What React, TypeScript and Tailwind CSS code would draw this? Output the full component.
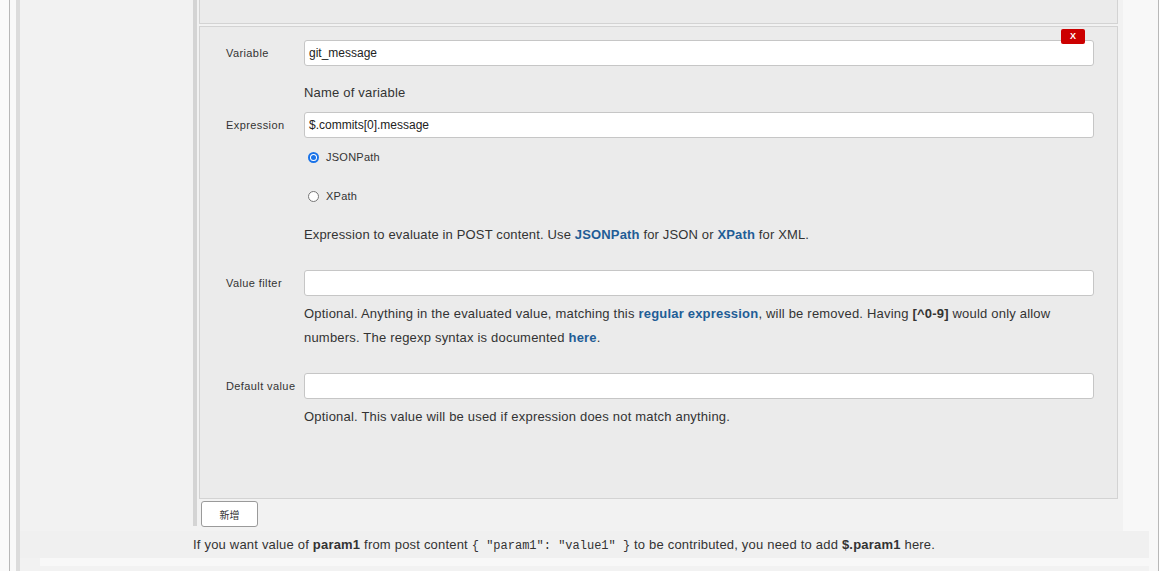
import React from 'react';

const font = { fontFamily: '"Liberation Sans", Arial, sans-serif' };

const Field: React.FC<{ label: string; value?: string; className?: string }> = ({ label, value = '', className = '' }) => (
  <div className={`flex items-center h-[26px] ${className}`}>
    <div className="w-[78px] text-[11px] tracking-[0.4px] text-[#333]">{label}</div>
    <div className="flex-1 h-[26px] bg-white border border-[#c6c6c6] rounded-[3px] px-[4px] flex items-center text-[12px] text-[#222]">
      {value}
    </div>
  </div>
);

const Radio: React.FC<{ checked?: boolean; label: string; className?: string }> = ({ checked, label, className = '' }) => (
  <div className={`ml-[78px] h-[20px] flex items-center ${className}`}>
    {checked ? (
      <span className="ml-[4px] w-[11px] h-[11px] rounded-full bg-[#1a73e8] flex items-center justify-center">
        <span className="w-[7px] h-[7px] rounded-full bg-white flex items-center justify-center">
          <span className="w-[5px] h-[5px] rounded-full bg-[#1a73e8]" />
        </span>
      </span>
    ) : (
      <span className="ml-[4px] w-[11px] h-[11px] rounded-full bg-white border border-[#767676]" />
    )}
    <span className="ml-[7px] text-[11px] tracking-[0.25px] text-[#333]">{label}</span>
  </div>
);

const Link: React.FC<{ children: React.ReactNode }> = ({ children }) => (
  <span className="text-[#1f5d96] font-semibold">{children}</span>
);

export default function App() {
  return (
    <div className="w-[1164px] h-[571px] overflow-hidden bg-white flex" style={font}>
      <div className="w-[9px] bg-[#fafafa]" />
      <div className="w-[1150px] border-x border-[#b8b8b8] bg-[#f9f9f9] pl-[6px] flex">
        <div className="flex-1 border-l-4 border-[#dcdcdc] flex flex-col">
          {/* main area */}
          <div className="h-[531px] flex">
            <div className="w-[1103px] bg-[#f2f2f2] pl-[173px] pr-[5px]">
              <div className="h-[526px] border-l-4 border-[#d4d4d4] pl-[2px]">
                <div className="h-[24px] bg-[#ebebeb] border-x border-b border-[#d3d3d3]" />
                <div className="relative mt-[2px] h-[473px] bg-[#ebebeb] border border-[#d3d3d3] pl-[26px] pr-[23px] pt-[13px] text-[#333]">
                  <div className="absolute top-[2px] right-[32px] w-[24px] h-[15px] bg-[#cc0000] rounded-[2px] flex items-center justify-center text-white text-[9px] font-bold">
                    X
                  </div>
                  <Field label="Variable" value="git_message" />
                  <div className="ml-[78px] mt-[15px] text-[13px] leading-[24px] tracking-[0.2px]">Name of variable</div>
                  <Field label="Expression" value="$.commits[0].message" className="mt-[7px]" />
                  <Radio checked label="JSONPath" className="mt-[9px]" />
                  <Radio label="XPath" className="mt-[19px]" />
                  <div className="ml-[78px] mt-[17px] text-[13px] leading-[24px] tracking-[0.15px]">
                    Expression to evaluate in POST content. Use <Link>JSONPath</Link> for JSON or <Link>XPath</Link> for XML.
                  </div>
                  <Field label="Value filter" className="mt-[23px]" />
                  <div className="ml-[78px] mt-[6px] text-[13px] leading-[24px] tracking-[0.2px]">
                    Optional. Anything in the evaluated value, matching this <Link>regular expression</Link>, will be removed. Having{' '}
                    <b>[^0-9]</b> would only allow
                    <br />
                    numbers. The regexp syntax is documented <Link>here</Link>.
                  </div>
                  <Field label="Default value" className="mt-[23px]" />
                  <div className="ml-[78px] mt-[6px] text-[13px] leading-[24px] tracking-[0.2px]">
                    Optional. This value will be used if expression does not match anything.
                  </div>
                </div>
                <button
                  className="mt-[2px] ml-[2px] w-[57px] h-[26px] bg-white border border-[#9a9a9a] rounded-[3px] text-[10px] text-[#333] flex items-center justify-center"
                  style={{ fontFamily: '"Noto Sans CJK SC", "Liberation Sans", sans-serif' }}
                >
                  新增
                </button>
              </div>
            </div>
            <div className="flex-1 bg-[#f8f8f8]" />
          </div>
          {/* help row */}
          <div className="h-[27px] flex">
            <div className="w-[1129px] bg-[#f0f0f0] pl-[173px] text-[13px] leading-[27px] tracking-[0.2px] text-[#333] whitespace-nowrap">
              If you want value of <b>param1</b> from post content{' '}
              <span className="text-[12px] tracking-normal" style={{ fontFamily: '"Liberation Mono", monospace' }}>
                {'{ "param1": "value1" }'}
              </span>{' '}
              to be contributed, you need to add <b>$.param1</b> here.
            </div>
            <div className="flex-1 bg-[#f8f8f8]" />
          </div>
          <div className="h-[8px] flex">
            <div className="w-[20px] bg-[#f2f2f2]" />
            <div className="flex-1 bg-[#f8f8f8]" />
          </div>
          <div className="flex-1 flex">
            <div className="w-[1129px] bg-[#f2f2f2]" />
            <div className="flex-1 bg-[#f8f8f8]" />
          </div>
        </div>
      </div>
      <div className="flex-1 bg-white" />
    </div>
  );
}
